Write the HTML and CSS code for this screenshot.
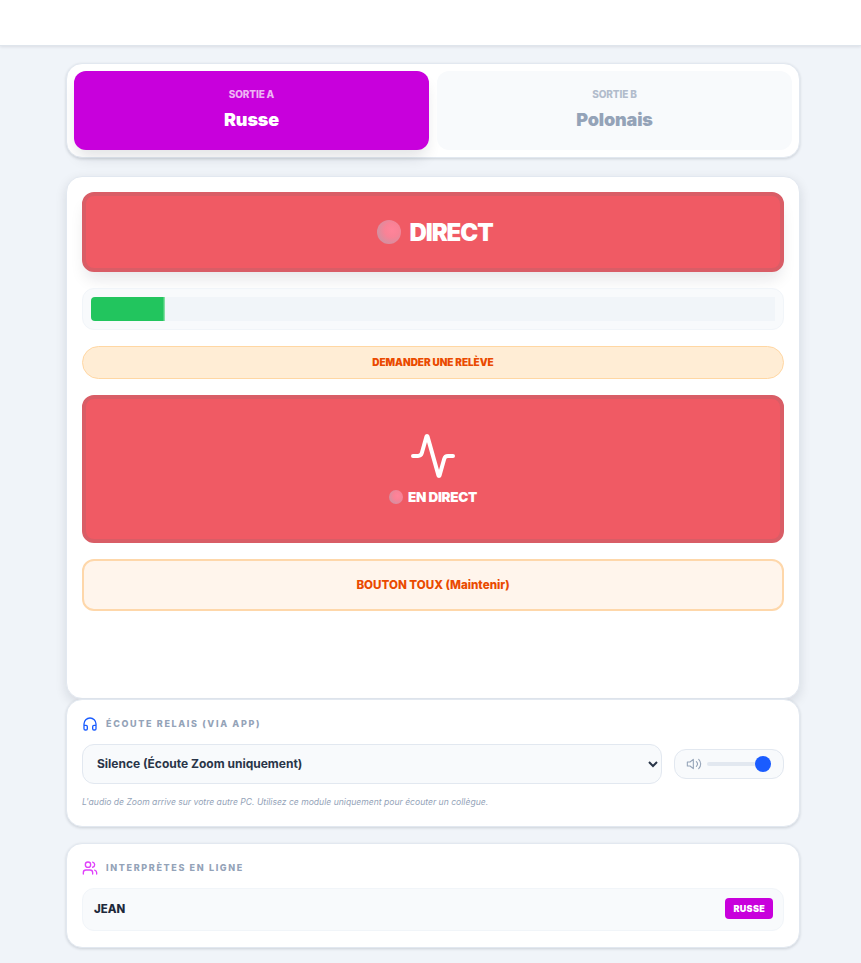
FILE: index.html
```html
<!DOCTYPE html>
<html lang="fr">
<head>
<meta charset="utf-8">
<title>Interprétation</title>
<link rel="stylesheet" href="styles.css">
</head>
<body>
<header class="topbar"></header>
<main class="page">
  <section class="card outputs">
    <button class="output active"><span class="output-label">SORTIE A</span><span class="output-name">Russe</span></button>
    <button class="output"><span class="output-label">SORTIE B</span><span class="output-name">Polonais</span></button>
  </section>

  <section class="card console">
    <button class="direct"><span class="dot dot-lg"></span><span>DIRECT</span></button>
    <div class="meter"><div class="meter-track"><div class="meter-fill"></div></div></div>
    <button class="relay">DEMANDER UNE RELÈVE</button>
    <button class="live">
      <svg class="live-icon" viewBox="0 0 24 24" fill="none" stroke="currentColor" stroke-width="2" stroke-linecap="round" stroke-linejoin="round"><path d="M22 12h-2.48a2 2 0 0 0-1.93 1.46l-2.35 8.36a.25.25 0 0 1-.48 0L9.24 2.18a.25.25 0 0 0-.48 0l-2.35 8.36A2 2 0 0 1 4.49 12H2"/></svg>
      <span class="live-text"><span class="dot dot-sm"></span><span>EN DIRECT</span></span>
    </button>
    <button class="cough">BOUTON TOUX (Maintenir)</button>
  </section>

  <section class="card listen">
    <h2 class="section-title">
      <svg class="title-icon blue" viewBox="0 0 24 24" fill="none" stroke="currentColor" stroke-width="2" stroke-linecap="round" stroke-linejoin="round"><path d="M3 14h3a2 2 0 0 1 2 2v3a2 2 0 0 1-2 2H5a2 2 0 0 1-2-2v-7a9 9 0 0 1 18 0v7a2 2 0 0 1-2 2h-1a2 2 0 0 1-2-2v-3a2 2 0 0 1 2-2h3"/></svg>
      <span>ÉCOUTE RELAIS (VIA APP)</span>
    </h2>
    <div class="listen-row">
      <select class="source"><option>Silence (Écoute Zoom uniquement)</option></select>
      <div class="volume">
        <svg class="vol-icon" viewBox="0 0 24 24" fill="none" stroke="currentColor" stroke-width="2" stroke-linecap="round" stroke-linejoin="round"><path d="M11 5 6 9H2v6h4l5 4z"/><path d="M15.54 8.46a5 5 0 0 1 0 7.07"/><path d="M19.07 4.93a10 10 0 0 1 0 14.14"/></svg>
        <input class="vol-range" type="range" min="0" max="100" value="100">
      </div>
    </div>
    <p class="hint">L'audio de Zoom arrive sur votre autre PC. Utilisez ce module uniquement pour écouter un collègue.</p>
  </section>

  <section class="card online">
    <h2 class="section-title">
      <svg class="title-icon magenta" viewBox="0 0 24 24" fill="none" stroke="currentColor" stroke-width="2" stroke-linecap="round" stroke-linejoin="round"><path d="M16 21v-2a4 4 0 0 0-4-4H6a4 4 0 0 0-4 4v2"/><circle cx="9" cy="7" r="4"/><path d="M22 21v-2a4 4 0 0 0-3-3.87"/><path d="M16 3.13a4 4 0 0 1 0 7.75"/></svg>
      <span>INTERPRÈTES EN LIGNE</span>
    </h2>
    <div class="person"><span class="person-name">JEAN</span><span class="badge">RUSSE</span></div>
  </section>
</main>
</body>
</html>
```

FILE: styles.css
```css
* { box-sizing: border-box; }
html, body { margin: 0; padding: 0; }
body {
  background: #f0f4f9;
  font-family: Inter, "Liberation Sans", sans-serif;
  color: #1e293b;
  height: 963px;
  overflow: hidden;
}
button { font-family: inherit; cursor: pointer; }

.topbar {
  height: 46px;
  background: #fff;
  border-bottom: 1px solid #dfe5ec;
  box-shadow: 0 1px 3px rgba(15, 23, 42, .1);
}
.page {
  width: 734px;
  margin: 17px 0 0 66px;
  display: flex;
  flex-direction: column;
}
.card {
  background: #fff;
  border: 1px solid #e2e8f0;
  border-radius: 16px;
  box-shadow: 0 1px 3px rgba(15, 23, 42, .16);
}

/* Outputs */
.outputs {
  height: 95px;
  padding: 7px;
  display: grid;
  grid-template-columns: 1fr 1fr;
  gap: 8px;
  margin-bottom: 18px;
}
.output {
  border: 0;
  border-radius: 12px;
  background: #f8fafc;
  color: #94a3b8;
  display: flex;
  flex-direction: column;
  align-items: center;
  justify-content: center;
  gap: 7px;
  padding: 0 0 2px;
}
.output.active {
  background: #c800dc;
  color: #fff;
  box-shadow: 0 10px 15px -3px rgba(15, 23, 42, .12);
}
.output-label {
  font-size: 10px;
  line-height: 14px;
  font-weight: 800;
  opacity: .7;
  letter-spacing: -.15px;
}
.output-name {
  font-size: 18px;
  line-height: 24px;
  font-weight: 900;
  letter-spacing: -.15px;
}

/* Console */
.console {
  height: 523px;
  padding: 15px;
  display: flex;
  flex-direction: column;
  gap: 16px;
  box-shadow: 0 4px 12px rgba(15, 23, 42, .12);
}
.direct {
  height: 80px;
  flex: none;
  border: 4px solid #d95d66;
  border-radius: 12px;
  background: #f05a64;
  color: #fff;
  font-size: 24px;
  font-weight: 900;
  letter-spacing: -1.05px;
  display: flex;
  align-items: center;
  justify-content: center;
  gap: 8px;
  padding: 0 0 0 4px;
  box-shadow: 0 10px 15px -3px rgba(15, 23, 42, .1);
}
.dot {
  display: block;
  border-radius: 50%;
  background: radial-gradient(circle at 62% 42%, #ff849a 0%, #f98296 35%, #b99aa8 100%);
  flex: none;
}
.dot-lg { width: 24px; height: 24px; }
.dot-sm { width: 14px; height: 14px; }

.meter {
  height: 42px;
  flex: none;
  padding: 8px;
  background: #f8fafc;
  border: 1px solid #f1f5f9;
  border-radius: 12px;
}
.meter-track {
  height: 24px;
  background: #f1f5f9;
  border-radius: 4px 0 0 4px;
  overflow: hidden;
}
.meter-fill {
  width: 74px;
  height: 100%;
  background: linear-gradient(90deg, #22c55e 97%, #9ee6b6 100%);
}

.relay {
  height: 33px;
  flex: none;
  border: 1px solid #ffd7a3;
  border-radius: 999px;
  background: #ffedd5;
  color: #ea4a00;
  font-size: 10px;
  font-weight: 900;
  letter-spacing: -.05px;
  padding: 0 0 2px;
}
.live {
  height: 148px;
  flex: none;
  border: 4px solid #d95d66;
  border-radius: 12px;
  background: #f05a64;
  color: #fff;
  display: flex;
  flex-direction: column;
  align-items: center;
  justify-content: center;
  gap: 8px;
  padding: 0;
}
.live-icon { width: 48px; height: 48px; display: block; }
.live-text {
  display: flex;
  align-items: center;
  gap: 5px;
  font-size: 13.5px;
  line-height: 18px;
  font-weight: 900;
  letter-spacing: -.3px;
}
.cough {
  height: 52px;
  flex: none;
  border: 2px solid #fed7aa;
  border-radius: 12px;
  background: #fff5ec;
  color: #ea4a00;
  font-size: 11.6px;
  font-weight: 800;
  padding: 0;
}

/* Sections */
.section-title {
  margin: 0;
  display: flex;
  align-items: center;
  gap: 8px;
  font-size: 9px;
  line-height: 16px;
  font-weight: 800;
  letter-spacing: 1.65px;
  color: #94a3b8;
}
.title-icon { width: 16px; height: 16px; flex: none; }
.blue { color: #1a5cff; }
.magenta { color: #e040fb; }

.listen {
  height: 128px;
  padding: 16px 15px 15px;
  margin-bottom: 16px;
}
.listen-row {
  display: flex;
  align-items: center;
  gap: 12px;
  margin-top: 12px;
}
.source {
  flex: 1;
  min-width: 0;
  height: 40px;
  padding: 0 10px 2px;
  background: #f8fafc;
  border: 1px solid #e2e8f0;
  border-radius: 12px;
  color: #293548;
  font-family: inherit;
  font-size: 12px;
  font-weight: 700;
}
.volume {
  width: 110px;
  height: 30px;
  flex: none;
  display: flex;
  align-items: center;
  gap: 5px;
  padding: 0 12px 0 11px;
  background: #f8fafc;
  border: 1px solid #e2e8f0;
  border-radius: 12px;
}
.vol-icon { width: 16px; height: 16px; color: #94a3b8; flex: none; stroke-width: 1.6; }
.vol-range {
  -webkit-appearance: none;
  appearance: none;
  width: 64px;
  height: 16px;
  margin: 0;
  background: transparent;
}
.vol-range::-webkit-slider-runnable-track {
  height: 4px;
  background: #e2e8f0;
  border-radius: 2px;
}
.vol-range::-webkit-slider-thumb {
  -webkit-appearance: none;
  width: 16px;
  height: 16px;
  margin-top: -6px;
  border-radius: 50%;
  background: #1a5cff;
}
.hint {
  margin: 12px 0 0;
  font-size: 8.6px;
  line-height: 12px;
  font-style: italic;
  color: #94a3b8;
}

.online {
  height: 105px;
  padding: 16px 15px 15px;
}
.person {
  margin-top: 12px;
  height: 43px;
  display: flex;
  align-items: center;
  justify-content: space-between;
  padding: 0 10px 2px 11px;
  background: #f8fafc;
  border: 1px solid #f1f5f9;
  border-radius: 12px;
}
.person-name { font-size: 11.4px; font-weight: 800; color: #1e293b; }
.badge {
  background: #c800dc;
  color: #fff;
  font-size: 9px;
  line-height: 21px;
  height: 21px;
  font-weight: 900;
  letter-spacing: .3px;
  padding: 0 8px;
  border-radius: 4px;
}
```
